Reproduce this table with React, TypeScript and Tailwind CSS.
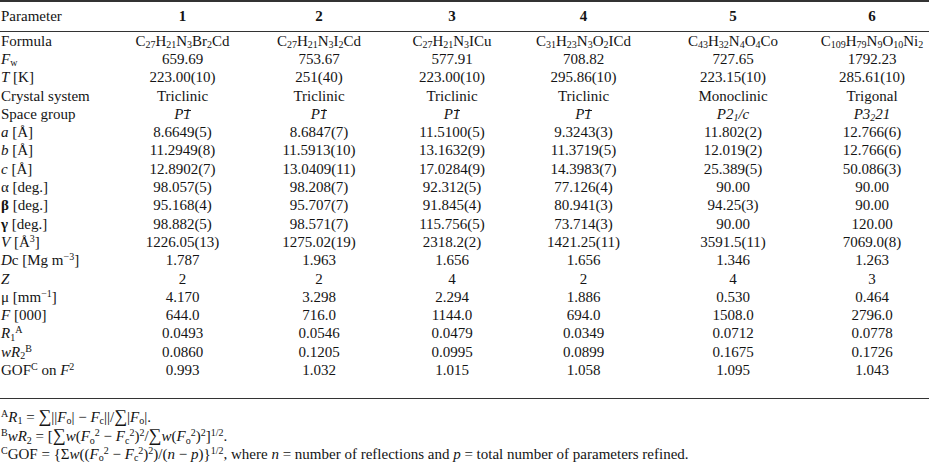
import type { ReactNode } from 'react'

type Row = { label: ReactNode; values: ReactNode[] }

const I = ({ children }: { children: ReactNode }) => <i>{children}</i>

// big summation sign used in the footnotes
const Sum = () => <span className="text-[18px] leading-none">∑</span>

const P1bar = () => (
  <i>
    P<span className="relative inline-block">
      1
      <span className="absolute left-[1px] right-[0px] top-[3px] h-px bg-[#1a1a1a]" />
    </span>
  </i>
)

const rows: Row[] = [
  {
    label: 'Formula',
    values: [
      <>C<sub>27</sub>H<sub>21</sub>N<sub>3</sub>Br<sub>2</sub>Cd</>,
      <>C<sub>27</sub>H<sub>21</sub>N<sub>3</sub>I<sub>2</sub>Cd</>,
      <>C<sub>27</sub>H<sub>21</sub>N<sub>3</sub>ICu</>,
      <>C<sub>31</sub>H<sub>23</sub>N<sub>3</sub>O<sub>2</sub>ICd</>,
      <>C<sub>43</sub>H<sub>32</sub>N<sub>4</sub>O<sub>4</sub>Co</>,
      <>C<sub>109</sub>H<sub>79</sub>N<sub>9</sub>O<sub>10</sub>Ni<sub>2</sub></>,
    ],
  },
  {
    label: <><I>F</I><sub>w</sub></>,
    values: ['659.69', '753.67', '577.91', '708.82', '727.65', '1792.23'],
  },
  {
    label: <><I>T</I> [K]</>,
    values: ['223.00(10)', '251(40)', '223.00(10)', '295.86(10)', '223.15(10)', '285.61(10)'],
  },
  {
    label: 'Crystal system',
    values: ['Triclinic', 'Triclinic', 'Triclinic', 'Triclinic', 'Monoclinic', 'Trigonal'],
  },
  {
    label: 'Space group',
    values: [
      <P1bar />,
      <P1bar />,
      <P1bar />,
      <P1bar />,
      <i>P2<sub>1</sub>/c</i>,
      <i>P3<sub>2</sub>21</i>,
    ],
  },
  {
    label: <><I>a</I> [Å]</>,
    values: ['8.6649(5)', '8.6847(7)', '11.5100(5)', '9.3243(3)', '11.802(2)', '12.766(6)'],
  },
  {
    label: <><I>b</I> [Å]</>,
    values: ['11.2949(8)', '11.5913(10)', '13.1632(9)', '11.3719(5)', '12.019(2)', '12.766(6)'],
  },
  {
    label: <><I>c</I> [Å]</>,
    values: ['12.8902(7)', '13.0409(11)', '17.0284(9)', '14.3983(7)', '25.389(5)', '50.086(3)'],
  },
  {
    label: 'α [deg.]',
    values: ['98.057(5)', '98.208(7)', '92.312(5)', '77.126(4)', '90.00', '90.00'],
  },
  {
    label: <><b className="font-bold">β</b> [deg.]</>,
    values: ['95.168(4)', '95.707(7)', '91.845(4)', '80.941(3)', '94.25(3)', '90.00'],
  },
  {
    label: <><b className="font-bold">γ</b> [deg.]</>,
    values: ['98.882(5)', '98.571(7)', '115.756(5)', '73.714(3)', '90.00', '120.00'],
  },
  {
    label: <><I>V</I> [Å<sup>3</sup>]</>,
    values: ['1226.05(13)', '1275.02(19)', '2318.2(2)', '1421.25(11)', '3591.5(11)', '7069.0(8)'],
  },
  {
    label: <><I>D</I>c [Mg m<sup>−3</sup>]</>,
    values: ['1.787', '1.963', '1.656', '1.656', '1.346', '1.263'],
  },
  {
    label: <I>Z</I>,
    values: ['2', '2', '4', '2', '4', '3'],
  },
  {
    label: <>μ [mm<sup>−1</sup>]</>,
    values: ['4.170', '3.298', '2.294', '1.886', '0.530', '0.464'],
  },
  {
    label: <><I>F</I> [000]</>,
    values: ['644.0', '716.0', '1144.0', '694.0', '1508.0', '2796.0'],
  },
  {
    label: <><I>R</I><sub>1</sub><sup>A</sup></>,
    values: ['0.0493', '0.0546', '0.0479', '0.0349', '0.0712', '0.0778'],
  },
  {
    label: <><I>wR</I><sub>2</sub><sup>B</sup></>,
    values: ['0.0860', '0.1205', '0.0995', '0.0899', '0.1675', '0.1726'],
  },
  {
    label: <>GOF<sup>C</sup> on <I>F</I><sup>2</sup></>,
    values: ['0.993', '1.032', '1.015', '1.058', '1.095', '1.043'],
  },
]

const grid = 'grid grid-cols-[115px_135px_138px_128px_135px_164px_114px]'

export default function App() {
  return (
    <div className="w-[929px] h-[462px] bg-white text-[#141414] text-[15px] leading-none [font-family:'Liberation_Serif','Times_New_Roman',serif] [&_sub]:text-[10px] [&_sup]:text-[10px]">
      <div className={`${grid} h-[32px] items-center border-t-2 border-b-[1.5px] border-[#333]`}>
        <div className="pl-px">Parameter</div>
        {[1, 2, 3, 4, 5, 6].map((n) => (
          <div key={n} className="text-center font-bold">
            {n}
          </div>
        ))}
      </div>

      <div className="pb-[18px] border-b-[1.5px] border-[#333]">
        {rows.map((row, i) => (
          <div key={i} className={`${grid} h-[18.3px] items-center`}>
            <div className="pl-px whitespace-nowrap">{row.label}</div>
            {row.values.map((v, j) => (
              <div key={j} className="text-center whitespace-nowrap">
                {v}
              </div>
            ))}
          </div>
        ))}
      </div>

      {/* footnotes */}
      <div className="pt-[8px] pl-px text-[15px] leading-[17.5px] whitespace-nowrap">
        <div>
          <sup>A</sup><I>R</I><sub>1</sub> = <Sum />||<I>F</I><sub>o</sub>| − <I>F</I><sub>c</sub>||/<Sum />|<I>F</I><sub>o</sub>|.
        </div>
        <div>
          <sup>B</sup><I>wR</I><sub>2</sub> = [<Sum /><I>w</I>(<I>F</I><sub>o</sub><sup>2</sup> − <I>F</I><sub>c</sub><sup>2</sup>)<sup>2</sup>/<Sum /><I>w</I>(<I>F</I><sub>o</sub><sup>2</sup>)<sup>2</sup>]<sup>1/2</sup>.
        </div>
        <div>
          <sup>C</sup>GOF = {'{'}Σ<I>w</I>((<I>F</I><sub>o</sub><sup>2</sup> − <I>F</I><sub>c</sub><sup>2</sup>)<sup>2</sup>)/(<I>n</I> − <I>p</I>){'}'}<sup>1/2</sup>, where <I>n</I> = number of reflections and <I>p</I> = total number of parameters refined.
        </div>
      </div>
    </div>
  )
}
